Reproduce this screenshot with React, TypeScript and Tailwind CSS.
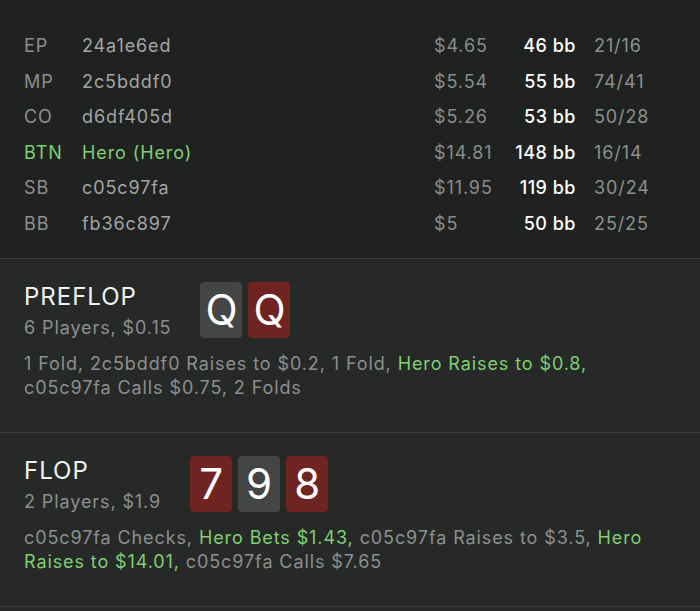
import React from 'react'

type Seat = {
  pos: string
  name: string
  stack: string
  bb: string
  stats: string
  hero?: boolean
}

const seats: Seat[] = [
  { pos: 'EP', name: '24a1e6ed', stack: '$4.65', bb: '46 bb', stats: '21/16' },
  { pos: 'MP', name: '2c5bddf0', stack: '$5.54', bb: '55 bb', stats: '74/41' },
  { pos: 'CO', name: 'd6df405d', stack: '$5.26', bb: '53 bb', stats: '50/28' },
  { pos: 'BTN', name: 'Hero (Hero)', stack: '$14.81', bb: '148 bb', stats: '16/14', hero: true },
  { pos: 'SB', name: 'c05c97fa', stack: '$11.95', bb: '119 bb', stats: '30/24' },
  { pos: 'BB', name: 'fb36c897', stack: '$5', bb: '50 bb', stats: '25/25' },
]

type Card = { rank: string; red?: boolean }
type Action = { text: string; hero?: boolean }

const streets: { name: string; info: string; cards: Card[]; actions: Action[] }[] = [
  {
    name: 'PREFLOP',
    info: '6 Players, $0.15',
    cards: [{ rank: 'Q' }, { rank: 'Q', red: true }],
    actions: [
      { text: '1 Fold, 2c5bddf0 Raises to $0.2, 1 Fold, ' },
      { text: 'Hero Raises to $0.8,', hero: true },
      { text: ' c05c97fa Calls $0.75, 2 Folds' },
    ],
  },
  {
    name: 'FLOP',
    info: '2 Players, $1.9',
    cards: [{ rank: '7', red: true }, { rank: '9' }, { rank: '8', red: true }],
    actions: [
      { text: 'c05c97fa Checks, ' },
      { text: 'Hero Bets $1.43,', hero: true },
      { text: ' c05c97fa Raises to $3.5, ' },
      { text: 'Hero Raises to $14.01,', hero: true },
      { text: ' c05c97fa Calls $7.65' },
    ],
  },
]

function PlayingCard({ card }: { card: Card }) {
  return (
    <div
      className={
        'w-[42px] h-[56px] rounded-[4px] flex items-center justify-center text-white text-[42px] leading-none tracking-normal ' +
        (card.red ? 'bg-[#6f2421]' : 'bg-[#444545]')
      }
    >
      {card.rank}
    </div>
  )
}

export default function App() {
  return (
    <div
      className="w-[700px] h-[611px] overflow-hidden bg-[#262927] text-[18px] tracking-[0.9px]"
      style={{ fontFamily: 'Inter, "Noto Sans", sans-serif' }}
    >
      {/* Seats */}
      <div className="bg-[#1f2220] pt-[28px] pb-[17px] pl-6 pr-6 border-b border-[#3a3d3b]">
        {seats.map((s) => (
          <div key={s.pos} className="flex items-center h-[35.5px]">
            <div className={'w-[58px] ' + (s.hero ? 'text-[#7fcf72]' : 'text-[#8d8f8e]')}>{s.pos}</div>
            <div className={'flex-1 ' + (s.hero ? 'text-[#7fcf72]' : 'text-[#a3a5a4]')}>{s.name}</div>
            <div className="w-[80px] text-[#8a8c8b]">{s.stack}</div>
            <div className="w-[62px] text-right text-white font-medium tracking-[0.5px]">{s.bb}</div>
            <div className="ml-[18px] w-[82px] text-[#8d8f8e]">{s.stats}</div>
          </div>
        ))}
      </div>

      {/* Streets */}
      {streets.map((st) => (
        <div key={st.name} className="pt-[23px] pb-[32px] px-6 border-b border-[#3a3d3b]">
          <div className="flex items-start gap-[29px]">
            <div>
              <div className="text-[24px] leading-[29px] text-[#f2f2f2] tracking-[1px]">{st.name}</div>
              <div className="mt-[5px] leading-[24px] text-[#8d8f8e]">{st.info}</div>
            </div>
            <div className="flex gap-[6px]">
              {st.cards.map((c, i) => (
                <PlayingCard key={i} card={c} />
              ))}
            </div>
          </div>
          <p className="mt-[12px] leading-[24px] text-[#8d8f8e]">
            {st.actions.map((a, i) => (
              <span key={i} className={a.hero ? 'text-[#7fcf72]' : undefined}>
                {a.text}
              </span>
            ))}
          </p>
        </div>
      ))}
    </div>
  )
}
